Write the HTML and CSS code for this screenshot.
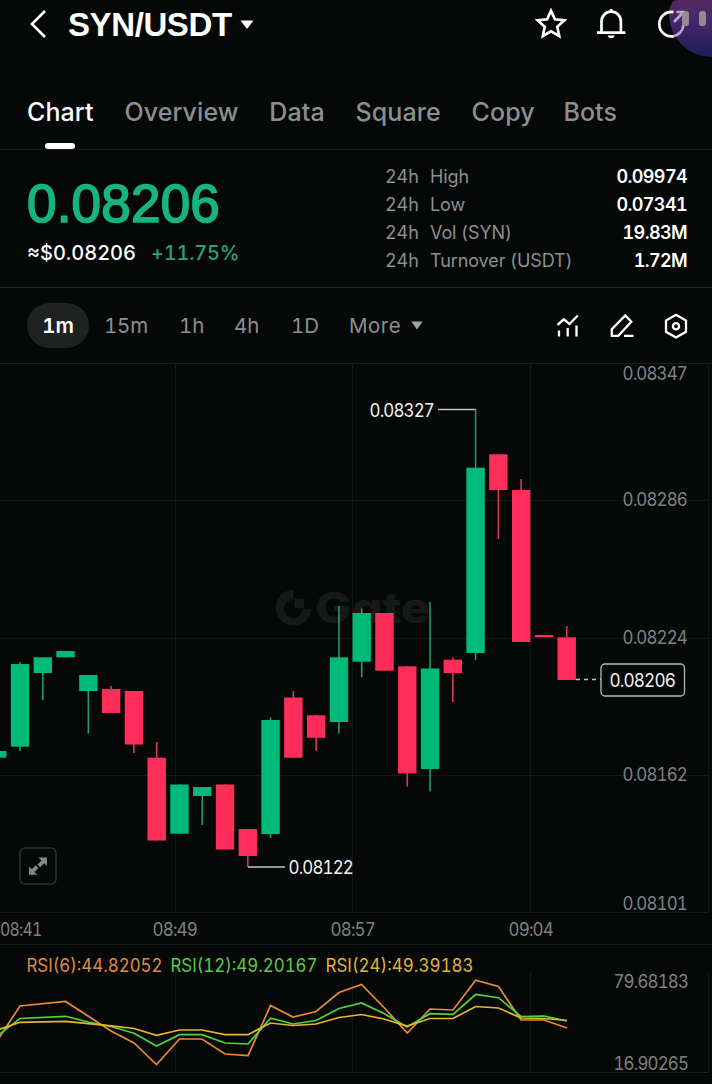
FILE: index.html
```html
<!DOCTYPE html>
<html lang="en">
<head>
    <meta charset="UTF-8">
    <meta name="viewport" content="width=device-width, initial-scale=1.0">
    <title>SYN/USDT</title>
    <link rel="stylesheet" href="styles.css">
</head>
<body>

    <header class="header">
        <svg class="back" width="18" height="30" viewBox="0 0 18 30"><path d="M16 2 3 15l13 13"/></svg>
        <h1 class="pair">SYN/USDT</h1>
        <svg class="caret" width="14" height="9" viewBox="0 0 14 9"><path d="M.5.5h13L7 9z"/></svg>
        <div class="bubble"></div>
        <div class="header-icons">
            <svg width="32" height="32" viewBox="0 0 32 32"><path d="M16 2.8l3.9 8.5 9.4 1.1-7 6.3 1.9 9.3-8.2-4.7-8.2 4.7 1.9-9.3-7-6.3 9.4-1.1z"/></svg>
            <svg width="32" height="32" viewBox="0 0 32 32"><path d="M6.5 24.5V13.3a9.7 9.7 0 0 1 19.4 0v11.2M2 24.6h28.4M16.2 1v3"/><path class="fill" d="M12.7 27.5h7a3.6 3.6 0 0 1-7 0z"/></svg>
            <svg width="32" height="32" viewBox="0 0 32 32"><path class="soft" d="M28.500 17a12.300 12.300 0 0 1-10.500 11.300M19 14l9-9.500M21.500 4h8"/><path d="M18.500 4A12.300 12.300 0 1 0 18.500 28.300"/><path d="M28.700 3v10"/></svg>
        </div>
        <div class="pause"><i></i><i></i></div>
    </header>

    <nav class="tabs">
        <a class="active">Chart</a>
        <a>Overview</a>
        <a>Data</a>
        <a>Square</a>
        <a>Copy</a>
        <a class="bots">Bots</a>
    </nav>

    <section class="summary">
        <div class="price">
            <div class="last">0.08206</div>
            <div class="sub"><span class="usd">≈$0.08206</span><span class="change">+11.75%</span></div>
        </div>
        <div class="stats">
            <div class="stat"><span class="day">24h</span><span>High</span><b>0.09974</b></div>
            <div class="stat"><span class="day">24h</span><span>Low</span><b>0.07341</b></div>
            <div class="stat"><span class="day">24h</span><span>Vol (SYN)</span><b>19.83M</b></div>
            <div class="stat"><span class="day">24h</span><span>Turnover (USDT)</span><b>1.72M</b></div>
        </div>
    </section>

    <div class="intervals">
        <span class="chip">1m</span>
        <span class="m15">15m</span>
        <span class="h1">1h</span>
        <span class="h4">4h</span>
        <span class="d1">1D</span>
        <span class="more">More</span>
        <svg class="caret" width="12" height="9" viewBox="0 0 12 9"><path d="M.3.5h11.400L6 8.500z"/></svg>
        <div class="tools">
            <svg width="26" height="26" viewBox="0 0 26 26"><path d="M2.500 11.800l6.300-5.500 5.700 4.700L22.800 2.500M4 17.500v6M12.700 15v8.500M21.500 12.500v11"/></svg>
            <svg width="26" height="26" viewBox="0 0 26 26"><path d="M2.800 22.800v-6.600L16.300 2.500l6 6.300L9.300 22.800zM15 22.800h9.500"/></svg>
            <svg width="26" height="26" viewBox="0 0 26 26"><path d="M13 1.800l10 5.800v11.200l-10 5.700-10-5.700V7.600z"/><circle cx="13" cy="13.200" r="3.100"/></svg>
        </div>
    </div>

    <svg class="chart" width="712" height="580" viewBox="0 364 712 580">
        <path class="grid" d="M0 500.500h709M0 638.500h709M0 775.500h709M0 912.500h709M175.500 364v549M352.500 364v549M530.500 364v549M708.500 364v549"/>
        <g class="watermark">
            <path d="M293.500 590v9.500a9.300 9.300 0 1 0 9.300 9.300h8.500A17.800 17.800 0 1 1 293.500 590zM294.500 598.500h9.500v9.500h-9.500z"/>
            <text x="315" y="623" textLength="115" lengthAdjust="spacingAndGlyphs">Gate</text>
        </g>
        <g id="candles"></g>
        <path class="mark" d="M438 409.500h37.500M248 867h37"/>
        <path class="mark dashed" d="M576 679.500h25"/>
        <rect class="tag" x="601" y="664" width="83.500" height="32" rx="4"/>
        <g class="label tight white">
            <text x="369.500" y="417" textLength="64.500" lengthAdjust="spacingAndGlyphs">0.08327</text>
            <text x="288.500" y="874" textLength="64.500" lengthAdjust="spacingAndGlyphs">0.08122</text>
            <text x="609.500" y="687" textLength="65.500" lengthAdjust="spacingAndGlyphs">0.08206</text>
        </g>
        <g class="label tight">
            <text x="622.500" y="380" textLength="64.500" lengthAdjust="spacingAndGlyphs">0.08347</text>
            <text x="622.500" y="506" textLength="64.500" lengthAdjust="spacingAndGlyphs">0.08286</text>
            <text x="622.500" y="644" textLength="64.500" lengthAdjust="spacingAndGlyphs">0.08224</text>
            <text x="622.500" y="781" textLength="64.500" lengthAdjust="spacingAndGlyphs">0.08162</text>
            <text x="622.500" y="910" textLength="64.500" lengthAdjust="spacingAndGlyphs">0.08101</text>
            <text x="0" y="936" textLength="41.500" lengthAdjust="spacingAndGlyphs">08:41</text>
            <text x="152.500" y="936" textLength="44.500" lengthAdjust="spacingAndGlyphs">08:49</text>
            <text x="330.500" y="936" textLength="44.500" lengthAdjust="spacingAndGlyphs">08:57</text>
            <text x="508.500" y="936" textLength="44.500" lengthAdjust="spacingAndGlyphs">09:04</text>
        </g>
        <g class="expand">
            <rect x="20" y="848" width="36" height="36" rx="5"/>
            <path d="M38.500 857.500h8.500v8.500l-2.800-2.800-4 4-2.700-2.700 4-4zM29 866.500l2.800 2.800 4-4 2.700 2.700-4 4 2.800 2.800H29z"/>
        </g>
    </svg>

    <svg class="rsi" width="712" height="139" viewBox="0 945 712 139">
        <path class="grid" d="M175.500 972v101M352.500 972v101M530.500 972v101M708.500 972v101"/>
        <path class="edge" d="M0 1072.500h709"/>
        <polyline class="rsi6" points="-3,1041 20,1006 65.600,1001.500 88,1016 111,1031 134,1043 156.500,1064.500 179.500,1039 202,1039 225,1054 248,1055.700 270.500,1005.500 293,1017 316,1011.500 339,992.500 361.500,984.500 384,1007.500 407.300,1033 430,1009 453,1010 475.700,980.300 498.500,986.500 521,1020 544,1020 567,1028"/>
        <polyline class="rsi12" points="-3,1036 20,1018.500 65.600,1016.300 88,1022 111,1026.500 134,1033.300 156.500,1046 179.500,1034.700 202,1034.700 225,1043 248,1044 270.500,1018.300 293,1024 316,1020.500 339,1008.500 361.500,1003 384,1013.500 407,1027 430,1013.700 453,1014.300 475.700,994.500 498.500,997.700 521,1016.500 544,1016 567,1021"/>
        <polyline class="rsi24" points="-3,1030 20,1022.300 65.600,1021.300 111,1025.800 134,1028.500 156.500,1035.300 179.500,1030 202,1030 225,1034.700 248,1034.700 270.500,1023 293,1025.500 316,1024 339,1017.500 361.500,1014.500 384,1019 407,1026 430,1018.500 453,1018.500 475.700,1006.500 498.500,1008 521,1018 544,1018.500 567,1020.500"/>
        <g class="label">
            <text class="t6" x="26.500" y="972" textLength="136" lengthAdjust="spacingAndGlyphs">RSI(6):44.82052</text>
            <text class="t12" x="170.500" y="972" textLength="147" lengthAdjust="spacingAndGlyphs">RSI(12):49.20167</text>
            <text class="t24" x="325.500" y="972" textLength="148" lengthAdjust="spacingAndGlyphs">RSI(24):49.39183</text>
        </g>
        <g class="label tight">
            <text x="613.500" y="988" textLength="74.500" lengthAdjust="spacingAndGlyphs">79.68183</text>
            <text x="613.500" y="1070" textLength="74.500" lengthAdjust="spacingAndGlyphs">16.90265</text>
        </g>
    </svg>

    <script>
        // wick top, body top, body bottom, wick bottom, direction
        let candles = [
            [751, 751, 757.7, 757.7, 'up'],
            [662, 664, 746.7, 751, 'up'],
            [657.3, 657.3, 673, 700, 'up'],
            [651, 651, 657.3, 657.3, 'up'],
            [675, 675, 691, 733.5, 'up'],
            [686, 689, 713, 713, 'down'],
            [691, 691, 744.5, 753, 'down'],
            [742, 757.7, 840.5, 840.5, 'down'],
            [784.5, 784.5, 833.7, 833.7, 'up'],
            [787, 787, 796, 825, 'up'],
            [784.5, 784.5, 849.5, 849.5, 'down'],
            [829, 829, 856, 867, 'down'],
            [717.5, 720, 834, 838, 'up'],
            [691, 697.5, 757.7, 757.7, 'down'],
            [715.3, 715.3, 737.7, 751, 'down'],
            [606, 657.3, 722, 733.5, 'up'],
            [608.5, 613, 661.7, 677.5, 'up'],
            [613, 613, 670.7, 670.7, 'down'],
            [666.3, 666.3, 773.5, 786.5, 'down'],
            [602, 668.5, 769, 791.5, 'up'],
            [657.5, 659.7, 673, 702, 'down'],
            [409.5, 467.7, 653, 660, 'up'],
            [454.3, 454.3, 490, 539, 'down'],
            [479, 490, 642, 642, 'down'],
            [635, 635, 637.3, 637.3, 'down'],
            [626, 637.3, 680, 680, 'down']
        ]

        let group = document.querySelector('#candles')
        let html = ''

        candles.forEach((c, i)=>{
            let x = 20 + (i - 1) * 22.78
            html += `<g class="${c[4]}"><path d="M${x} ${c[0]}V${c[3]}"/><rect x="${x - 9.2}" y="${c[1]}" width="18.4" height="${c[2] - c[1]}"/></g>`
        })

        group.innerHTML = html
    </script>
</body>
</html>
```
FILE: styles.css
```css
body{
    margin: 0;
    width: 712px;
    height: 1084px;
    overflow: hidden;
    background: #060808;
    color: white;
    font-family: Inter, "Liberation Sans", sans-serif;
    font-feature-settings: "tnum";
}

svg{
    display: block;
    flex: none;
    fill: none;
    stroke: white;
}

.header{
    position: relative;
    display: flex;
    align-items: center;
    height: 48px;
    padding-left: 29px;
}
.back{
    stroke-width: 2.6;
    margin-top: -1px;
}
.pair{
    margin: 1px 0 0 21px;
    width: 164px;
    font-family: "Liberation Sans", sans-serif;
    font-size: 33px;
    letter-spacing: -0.4px;
    font-weight: 700;
    white-space: nowrap;
}
.caret{
    margin-left: 8px;
    fill: white;
    stroke: none;
}
.header-icons{
    position: relative;
    display: flex;
    gap: 28px;
    margin-left: 281px;
}
.header-icons svg{
    stroke-width: 2.7;
}
.header-icons .fill{
    fill: white;
    stroke: none;
}
.soft{
    stroke: #b7a3d6;
}
.bubble{
    position: absolute;
    right: 0;
    top: 0;
    width: 43px;
    height: 57px;
    border-radius: 8px 0 0 43px / 14px 0 0 43px;
    background: linear-gradient(#55295f, #41266a 45%, #241e5c 90%);
}
.pause{
    position: absolute;
    right: 6px;
    top: 11px;
    display: flex;
    gap: 10px;
}
.pause i{
    width: 7px;
    height: 15px;
    border-radius: 3px;
    background: #938a92;
}

.tabs{
    display: flex;
    height: 101px;
    border-bottom: 1px solid #1c1e1e;
    font-size: 25px;
    letter-spacing: 0.1px;
    font-weight: 500;
    color: #8d8f90;
    padding-left: 27px;
    gap: 30.7px;
}
.tabs a{
    display: flex;
    flex-direction: column;
    align-items: center;
    justify-content: space-between;
    padding-top: 49px;
}
.tabs .bots{
    margin-left: -2px;
}
.tabs .active{
    color: white;
}
.tabs .active::after{
    content: "";
    width: 30px;
    height: 6px;
    border-radius: 3px;
    background: white;
}

.summary{
    display: flex;
    height: 137px;
    border-bottom: 1px solid #222424;
}
.price{
    width: 358px;
    padding: 29px 0 0 27px;
}
.last{
    font-family: "Liberation Sans", sans-serif;
    font-size: 53px;
    line-height: 50px;
    letter-spacing: 0.2px;
    color: #16b57d;
    -webkit-text-stroke: 1.7px #16b57d;
}
.sub{
    display: flex;
    gap: 15px;
    margin-top: 12px;
    font-size: 20px;
    line-height: 24px;
    font-weight: 500;
}
.change{
    letter-spacing: -0.25px;
    color: #2aa277;
}
.stats{
    width: 302px;
    padding-top: 13px;
}
.stat{
    display: flex;
    height: 28px;
    line-height: 28px;
    font-size: 18px;
    letter-spacing: -0.1px;
    color: #8d8f90;
}
.day{
    width: 45px;
}
.stat b{
    margin-left: auto;
    font-weight: 600;
    letter-spacing: -0.6px;
    color: white;
}

.intervals{
    display: flex;
    align-items: center;
    height: 75px;
    border-bottom: 1px solid #1c1e1e;
    padding-left: 27px;
    font-size: 20.5px;
    color: #8d8f90;
}
.chip{
    width: 62px;
    height: 45px;
    line-height: 45px;
    margin-right: 15px;
    border-radius: 23px;
    background: #202121;
    color: white;
    font-weight: 600;
    text-align: center;
}
.m15{
    width: 75px;
    letter-spacing: -0.2px;
}
.h1{
    width: 55px;
}
.h4{
    width: 57px;
}
.d1{
    width: 58px;
}
.more{
    width: 54px;
    letter-spacing: 0.5px;
}
.intervals .caret{
    fill: #a0a2a2;
}
.tools{
    display: flex;
    gap: 28px;
    margin-left: 132px;
}
.tools svg{
    stroke-width: 2.3;
}

.grid{
    stroke: #151717;
}
.edge{
    stroke: #1c1e1e;
}
.up{
    fill: #00ba7a;
    stroke: #1e9c6c;
}
.down{
    fill: #ff2d59;
    stroke: #d8385c;
}
.up path, .down path{
    stroke-width: 1.6;
}
.up rect, .down rect{
    stroke: none;
}
.mark{
    stroke: #c4c4c4;
    stroke-width: 1.5;
}
.dashed{
    stroke-dasharray: 4 4;
    stroke-width: 1.3;
}
.tag{
    fill: #060808;
    stroke: #b9baba;
    stroke-width: 1.3;
}
.label{
    font-size: 18px;
    fill: #7f8182;
    stroke: none;
}
.tight{
    letter-spacing: -0.9px;
}
.white{
    fill: #f2f2f2;
}
.watermark{
    font-size: 42px;
    font-weight: 800;
    font-feature-settings: "cv11";
    fill: #171919;
    stroke: none;
}
.expand rect{
    fill: #060808;
    stroke: #303232;
    stroke-width: 1.5;
}
.expand path{
    fill: #858686;
    stroke: none;
}

.rsi{
    border-top: 1px solid #1c1e1e;
}
.rsi polyline{
    stroke-width: 1.7;
}
.rsi6{
    stroke: #e78b35;
}
.rsi12{
    stroke: #4fd63c;
}
.rsi24{
    stroke: #e3b72e;
}
.t6{
    fill: #df8c42;
}
.t12{
    fill: #5acb45;
}
.t24{
    fill: #e0b334;
}
```
